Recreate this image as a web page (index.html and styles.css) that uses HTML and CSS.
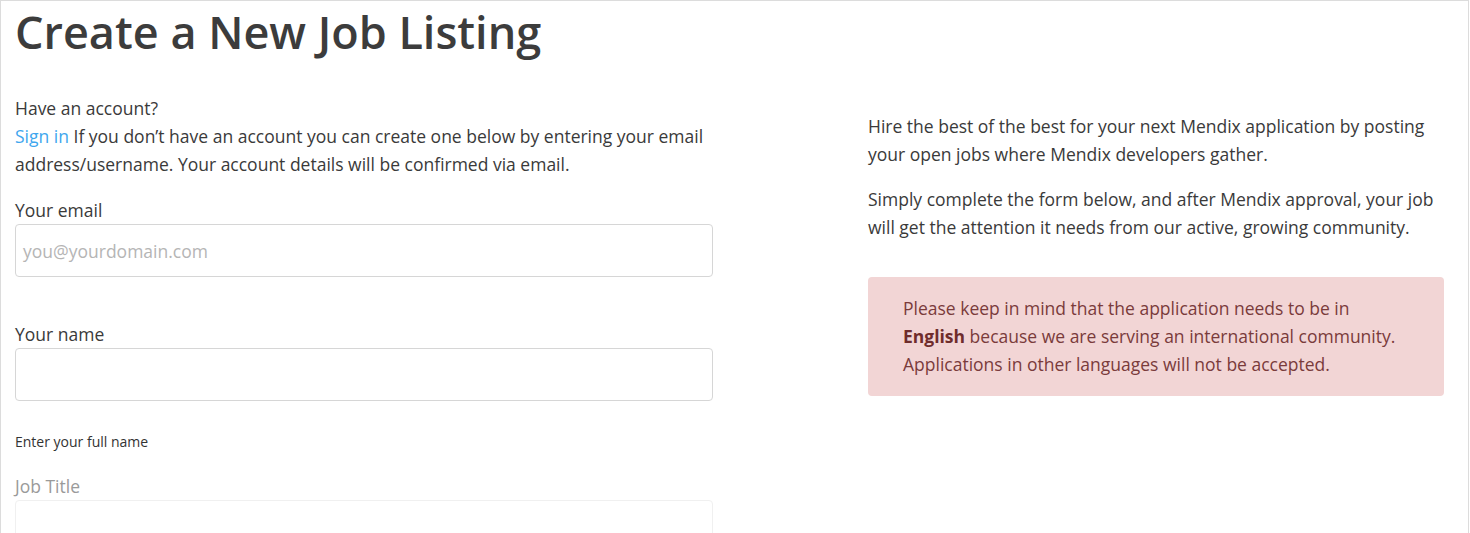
FILE: index.html
```html
<!DOCTYPE html>
<html lang="en">
<head>
<meta charset="utf-8">
<title>Create a New Job Listing</title>
<link rel="stylesheet" href="styles.css">
</head>
<body>
<div class="frame">
  <h1 class="title">Create a New Job Listing</h1>
  <div class="row">
    <div class="col-left">
      <p class="intro">Have an account?<br><a class="link" href="#">Sign in</a> If you don’t have an account you can create one below by entering your email address/username. Your account details will be confirmed via email.</p>
      <div class="field">
        <label class="label">Your email</label>
        <div class="input placeholder">you@yourdomain.com</div>
      </div>
      <div class="field field-name">
        <label class="label">Your name</label>
        <div class="input"></div>
        <div class="help">Enter your full name</div>
      </div>
      <div class="field field-faded">
        <label class="label">Job Title</label>
        <div class="input"></div>
      </div>
    </div>
    <div class="col-right">
      <p class="para">Hire the best of the best for your next Mendix application by posting your open jobs where Mendix developers gather.</p>
      <p class="para">Simply complete the form below, and after Mendix approval, your job will get the attention it needs from our active, growing community.</p>
      <div class="alert">Please keep in mind that the application needs to be in <strong>English</strong> because we are serving an international community. Applications in other languages will not be accepted.</div>
    </div>
  </div>
</div>
</body>
</html>
```

FILE: styles.css
```css
html, body {
  margin: 0;
  padding: 0;
  background: #fff;
}
body {
  font-family: "Open Sans", "Noto Sans", sans-serif;
  font-size: 17.5px;
  line-height: 28px;
  color: #3a3a3a;
  overflow: hidden;
}
.frame {
  width: 1469px;
  height: 700px;
  border: 1px solid #dcdcdc;
  border-bottom: none;
  padding: 0 0 0 14px;
  box-sizing: border-box;
}
.title {
  margin: 0;
  padding-top: 2px;
  font-size: 45px;
  line-height: 58px;
  font-weight: 600;
  color: #3c3c3c;
}
.row {
  display: flex;
  gap: 155px;
}
.col-left {
  width: 698px;
  padding-top: 33px;
}
.col-right {
  width: 576px;
  padding-top: 51px;
}
.intro {
  margin: 0 0 18px;
}
.link {
  color: #3ea6ee;
  text-decoration: none;
}
.field {
  display: flex;
  flex-direction: column;
}
.label {
  display: block;
}
.input {
  height: 53px;
  box-sizing: border-box;
  border: 1px solid #d6d6d6;
  border-radius: 4px;
  padding: 12px 7px;
  line-height: 28px;
}
.placeholder {
  color: #b5b5b5;
}
.field-name {
  margin-top: 43px;
}
.help {
  font-size: 14px;
  line-height: 20px;
  margin-top: 31px;
  color: #333;
}
.field-faded {
  margin-top: 20px;
}
.field-faded .label {
  color: #9a9a9a;
}
.field-faded .input {
  border-color: #f0f0f0;
}
.para {
  margin: 0 0 17px;
}
.alert {
  margin-top: 36px;
  background: #f2d5d5;
  color: #7a3b3b;
  border-radius: 4px;
  padding: 17px 35px 18px 35px;
}
.alert strong {
  font-weight: 700;
  color: #6f2c2c;
}
```
